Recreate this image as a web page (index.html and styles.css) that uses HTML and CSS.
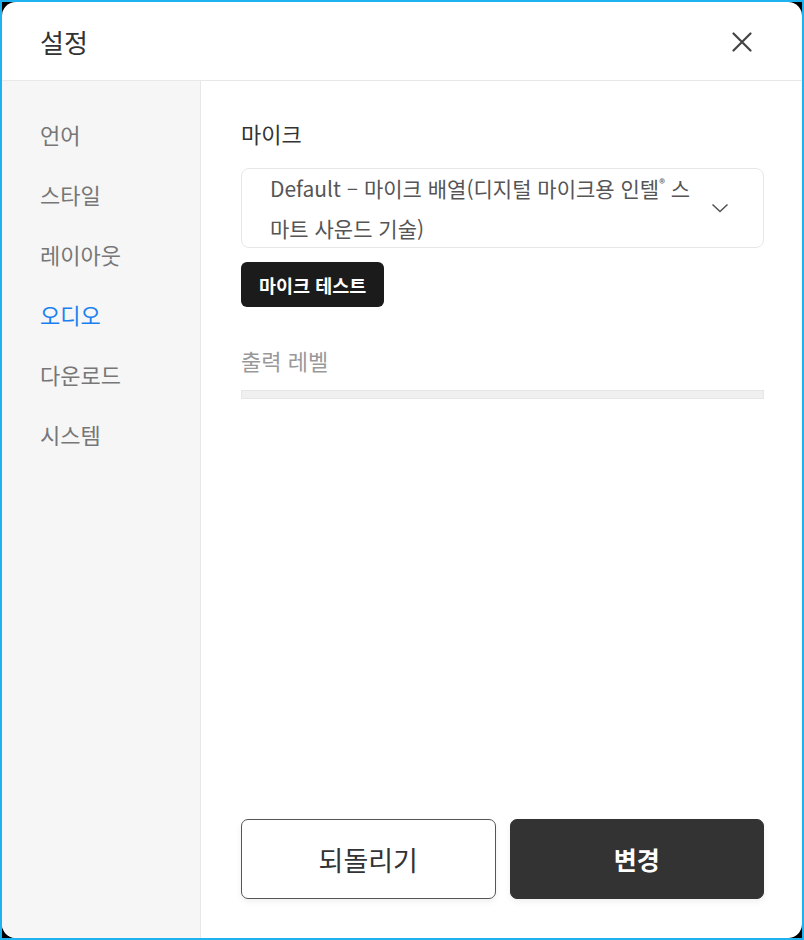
FILE: index.html
```html
<!DOCTYPE html>
<html lang="ko">
<head>
<meta charset="utf-8">
<link rel="stylesheet" href="styles.css">
</head>
<body>
<div class="frame">
  <div class="dialog">
    <header class="header">
      <h1 class="title">설정</h1>
      <button class="close" aria-label="닫기">
        <svg width="20" height="20" viewBox="0 0 20 20"><path d="M1.5 1.5L18.5 18.5M18.5 1.5L1.5 18.5" stroke="#444" stroke-width="2.2" fill="none" stroke-linecap="round"/></svg>
      </button>
    </header>
    <div class="body">
      <nav class="sidebar">
        <div class="nav-item">언어</div>
        <div class="nav-item">스타일</div>
        <div class="nav-item">레이아웃</div>
        <div class="nav-item active">오디오</div>
        <div class="nav-item">다운로드</div>
        <div class="nav-item">시스템</div>
      </nav>
      <main class="content">
        <div class="label">마이크</div>
        <div class="select">
          <div class="select-text">Default – 마이크 배열(디지털 마이크용 인텔<sup class="reg">®</sup> 스마트 사운드 기술)</div>
          <svg class="chev" width="18" height="10" viewBox="0 0 18 10"><path d="M1.5 1.5L9 8.5L16.5 1.5" stroke="#555" stroke-width="1.6" fill="none"/></svg>
        </div>
        <button class="test-btn">마이크 테스트</button>
        <div class="sublabel">출력 레벨</div>
        <div class="level"></div>
        <div class="spacer"></div>
        <div class="actions">
          <button class="btn btn-outline">되돌리기</button>
          <button class="btn btn-dark">변경</button>
        </div>
      </main>
    </div>
  </div>
</div>
</body>
</html>
```

FILE: styles.css
```css
* { box-sizing: border-box; }
html, body { margin: 0; padding: 0; }
body {
  width: 804px;
  height: 940px;
  font-family: "Noto Sans CJK KR", "Noto Sans", sans-serif;
}
.frame {
  width: 804px;
  height: 940px;
  border: 2px solid #1fb2f0;
  background: #000;
}
.dialog {
  width: 800px;
  height: 936px;
  background: #fff;
  border-radius: 14px;
  overflow: hidden;
  display: flex;
  flex-direction: column;
}
.header {
  height: 79px;
  flex: none;
  border-bottom: 1px solid #e8e8e8;
  display: flex;
  align-items: center;
  justify-content: space-between;
  padding: 0 50px 0 38px;
}
.title {
  margin: 0;
  font-size: 26px;
  line-height: 36px;
  font-weight: 400;
  color: #333;
  padding-top: 1px;
}
.close {
  border: 0;
  background: none;
  padding: 0;
  width: 20px;
  height: 20px;
  display: flex;
  margin-top: 2px;
}
.body {
  flex: 1;
  display: flex;
  min-height: 0;
}
.sidebar {
  width: 199px;
  flex: none;
  background: #f6f6f6;
  border-right: 1px solid #e8e8e8;
  padding-top: 23px;
}
.nav-item {
  height: 60px;
  line-height: 60px;
  padding-left: 38px;
  font-size: 22px;
  color: #777;
}
.nav-item.active { color: #1a80f0; }
.content {
  flex: 1;
  padding: 39px 38px 39px 40px;
  display: flex;
  flex-direction: column;
}
.label {
  font-size: 22px;
  line-height: 26px;
  color: #333;
  margin-bottom: 22px;
}
.select {
  height: 80px;
  border: 1px solid #e6e6e6;
  border-radius: 8px;
  display: flex;
  align-items: center;
  padding: 0 34px 0 28px;
}
.select-text {
  flex: 1;
  font-family: "Noto Sans CJK KR", sans-serif;
  font-size: 21px;
  line-height: 40px;
  color: #555;
  padding-right: 4px;
  margin-top: -1px;
}
.reg {
  font-size: 12px;
  line-height: 1;
  vertical-align: 9px;
}
.chev { flex: none; }
.test-btn {
  align-self: flex-start;
  margin-top: 14px;
  height: 45px;
  padding: 0 18px;
  border: 0;
  border-radius: 6px;
  background: #1b1b1b;
  color: #fff;
  font-family: "Noto Sans CJK KR", sans-serif;
  font-size: 18.5px;
  font-weight: 700;
}
.sublabel {
  margin-top: 40px;
  font-size: 22px;
  line-height: 26px;
  color: #999;
}
.level {
  margin-top: 17px;
  height: 9px;
  background: #f0f0f0;
  border: 1px solid #e6e6e6;
}
.spacer { flex: 1; }
.actions {
  display: flex;
  gap: 14px;
}
.btn {
  flex: 1;
  height: 80px;
  border-radius: 7px;
  font-family: "Noto Sans CJK KR", sans-serif;
  box-shadow: 0 3px 6px rgba(0,0,0,0.06);
}
.btn-outline {
  background: #fff;
  border: 1px solid #555;
  color: #333;
  font-size: 27px;
}
.btn-dark {
  background: #333;
  border: 1px solid #333;
  color: #fff;
  font-weight: 700;
  font-size: 25px;
}
```
